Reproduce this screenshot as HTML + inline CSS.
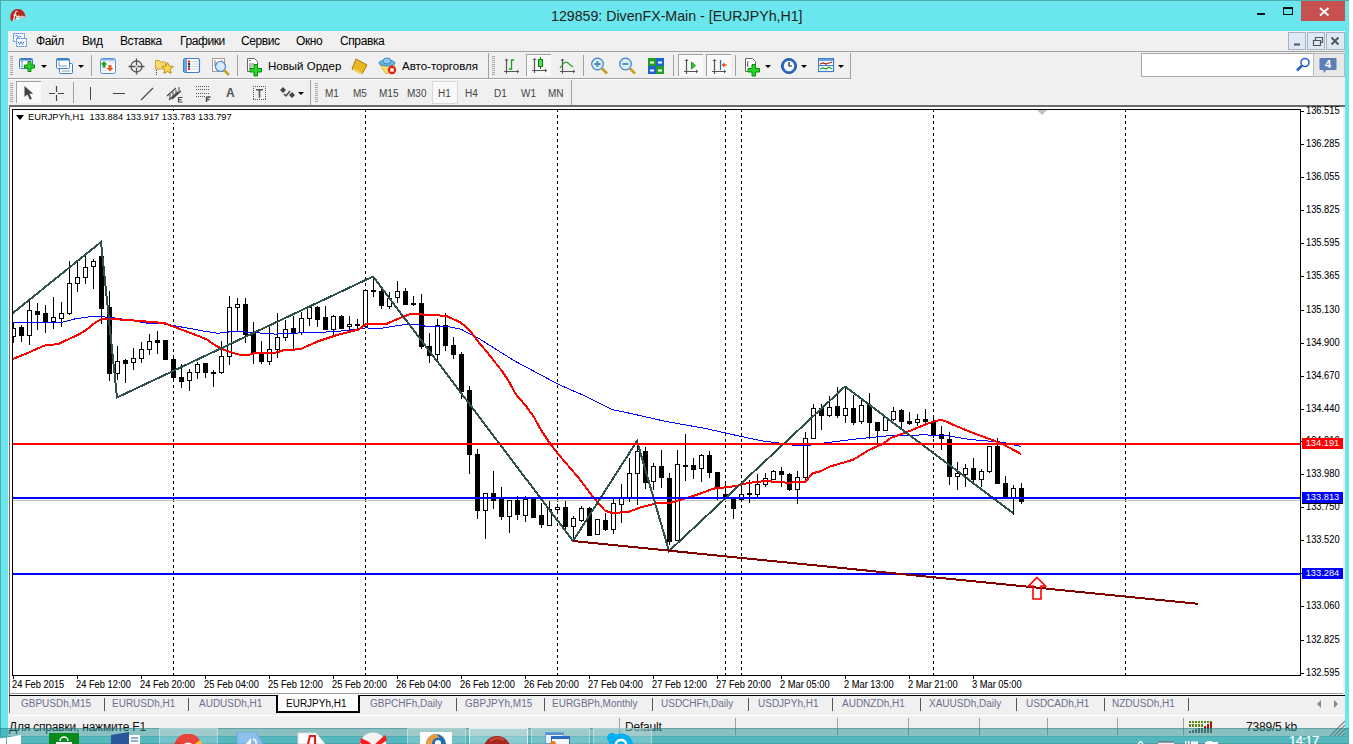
<!DOCTYPE html>
<html><head><meta charset="utf-8"><style>
*{margin:0;padding:0;box-sizing:content-box}
body{width:1353px;height:744px;overflow:hidden;position:relative;background:#6ae7ec;font-family:"Liberation Sans", sans-serif}
.a{position:absolute}
.tk{position:absolute;background:#000}
.pl{position:absolute;left:1306px;font-size:10px;line-height:12px;color:#000;white-space:nowrap;transform:scaleX(0.93);transform-origin:0 0;-webkit-text-stroke:0.08px #000}
.hl{position:absolute;left:1302px;width:41px;height:11px;color:#fff;font-size:9.3px;line-height:11px;text-align:center}
.tl{position:absolute;top:679px;font-size:10px;line-height:12px;color:#000;white-space:nowrap;transform:scaleX(0.93);transform-origin:0 0;-webkit-text-stroke:0.08px #000}
.tab{position:absolute;top:698px;font-size:10px;line-height:12px;color:#6e6e8c;white-space:nowrap}
.mn{position:absolute;top:34px;font-size:12px;letter-spacing:-0.4px;line-height:15px;color:#000;white-space:nowrap}
.tf{position:absolute;top:87px;font-size:10px;line-height:13px;color:#444;white-space:nowrap}
</style></head><body>
<!-- title bar -->
<div class="a" style="left:0;top:0;width:1353px;height:1px;background:#4faaae"></div>
<div class="a" style="left:0;top:0;width:1px;height:744px;background:#4faaae"></div>
<div class="a" style="left:1349px;top:0;width:4px;height:744px;background:#fff"></div>
<svg class="a" style="left:9px;top:8px" width="18" height="14"><path d="M2,13 C0,8 2,2 8,1 C13,0.5 16,4 16.5,9 C14,7 10,7.5 7.5,10 C6,11.5 4,13 2,13 Z" fill="#b8281e"/><path d="M16.5,9 C14,7 10,7.5 7.5,10 C10,9 13,9.5 16,10.5 Z" fill="#f2b0a8"/><path d="M4.5,12.5 L6.5,4.5 Q7,3 8.5,3.3 M4.5,7 h3 M7,7.5 l3,4 M10,7.5 l-3,4" stroke="#fff" stroke-width="1.1" fill="none"/></svg>
<div class="a" style="left:551px;top:7px;font-size:14.2px;line-height:18px;color:#222;white-space:nowrap">129859: DivenFX-Main - [EURJPYh,H1]</div>
<div class="a" style="left:1257px;top:13px;width:8px;height:2px;background:#1a1010"></div>
<div class="a" style="left:1283px;top:7px;width:8px;height:5px;border:1px solid #1a1010;border-top:2px solid #1a1010"></div>
<div class="a" style="left:1301px;top:1px;width:44px;height:20px;background:#c75050"></div>
<svg class="a" style="left:1316px;top:5px" width="16" height="14"><path d="M4,3 L12.5,10.5 M12.5,3 L4,10.5" stroke="#fff" stroke-width="1.8"/></svg>
<!-- app body -->
<div class="a" style="left:8px;top:31px;width:1337px;height:697px;background:#f0f0f0"></div>
<div class="a" style="left:8px;top:51px;width:1337px;height:1px;background:#a0a0a0"></div>
<svg class="a" style="left:12px;top:32px" width="17" height="16"><rect x="1.5" y="1.5" width="11" height="8" fill="#fff" stroke="#4a86e8" stroke-dasharray="1.5 0.5"/><rect x="4.5" y="6.5" width="10" height="8" fill="#fff" stroke="#4a86e8" stroke-dasharray="1.5 0.5"/><path d="M3,4.5 l1.5,-1.5 l1.5,3 l1.5,-2 l2,1" stroke="#4a86e8" fill="none"/><path d="M6,9.5 l1.5,3 l1.5,-3 l1.5,3 l1.5,-3" stroke="#4a86e8" fill="none"/></svg>
<div class="mn" style="left:36px">Файл</div>
<div class="mn" style="left:82px">Вид</div>
<div class="mn" style="left:120px">Вставка</div>
<div class="mn" style="left:180px">Графики</div>
<div class="mn" style="left:241px">Сервис</div>
<div class="mn" style="left:296px">Окно</div>
<div class="mn" style="left:340px">Справка</div>
<!-- MDI buttons -->
<div class="a" style="left:1288px;top:32px;width:16px;height:16px;border:1px solid #a6b2c2;background:#dfe9f5"></div>
<div class="a" style="left:1307px;top:32px;width:16px;height:16px;border:1px solid #a6b2c2;background:#dfe9f5"></div>
<div class="a" style="left:1326px;top:32px;width:17px;height:16px;border:1px solid #a6b2c2;background:#dfe9f5"></div>
<svg class="a" style="left:1288px;top:32px" width="57" height="18">
<path d="M6,12.5 h6" stroke="#555" stroke-width="2"/>
<path d="M25.5,8.5 h7 v5 h-7 z M27.5,8.5 v-3 h7 v5 h-2" stroke="#555" stroke-width="1.2" fill="none"/>
<path d="M43.5,5.5 l7,7 M50.5,5.5 l-7,7" stroke="#555" stroke-width="2"/>
</svg>
<!-- search -->
<div class="a" style="left:1141px;top:53px;width:171px;height:22px;border:1px solid #a8a8a8;background:#fff"></div>
<div class="a" style="left:1313px;top:53px;width:30px;height:22px;border:1px solid #b8b8b8;background:#e8e8e8"></div>
<svg class="a" style="left:1319px;top:57px" width="18" height="18"><path d="M1.5,1 h15 a1,1 0 0 1 1,1 v10 a1,1 0 0 1 -1,1 h-9 l-3,3 v-3 h-3 a1,1 0 0 1 -1,-1 v-10 a1,1 0 0 1 1,-1 z" fill="#5b7fb5"/></svg>
<div class="a" style="left:1321px;top:58px;width:14px;height:12px;color:#fff;font-size:11px;line-height:12px;text-align:center;font-weight:bold">4</div>
<svg class="a" style="left:1295px;top:57px" width="16" height="16"><circle cx="10" cy="5.5" r="4" fill="#fff" stroke="#2a62c8" stroke-width="1.6"/><path d="M7,8.5 l-5,5" stroke="#2a62c8" stroke-width="2.6"/></svg>
<!-- toolbar -->
<div class="a" style="left:8px;top:78px;width:843px;height:1px;background:#a0a0a0"></div>
<div class="a" style="left:8px;top:79px;width:844px;height:1px;background:#fff"></div>
<div class="a" style="left:10px;top:56px;width:3px;height:1px;background:#a8a8a8"></div><div class="a" style="left:10px;top:58px;width:3px;height:1px;background:#a8a8a8"></div><div class="a" style="left:10px;top:60px;width:3px;height:1px;background:#a8a8a8"></div><div class="a" style="left:10px;top:62px;width:3px;height:1px;background:#a8a8a8"></div><div class="a" style="left:10px;top:64px;width:3px;height:1px;background:#a8a8a8"></div><div class="a" style="left:10px;top:66px;width:3px;height:1px;background:#a8a8a8"></div><div class="a" style="left:10px;top:68px;width:3px;height:1px;background:#a8a8a8"></div><div class="a" style="left:10px;top:70px;width:3px;height:1px;background:#a8a8a8"></div><div class="a" style="left:10px;top:72px;width:3px;height:1px;background:#a8a8a8"></div><div class="a" style="left:10px;top:74px;width:3px;height:1px;background:#a8a8a8"></div>
<svg class="a" style="left:19px;top:57px" width="18" height="17" viewBox="0 0 18 17"><rect x="0.5" y="1.5" width="13" height="10" rx="1" fill="#fff" stroke="#3b7fc6"/><rect x="1" y="2" width="12" height="1.5" fill="#3b7fc6"/><path d="M3,4 v6 M2,5 l1,-1 l1,1 M2,9 l1,1 l1,-1" stroke="#7a9cc0" fill="none"/><path d="M9,4.5 h3 v3.5 h3.5 v3 h-3.5 v3.5 h-3 v-3.5 h-3.5 v-3 h3.5 z" fill="#2ad62a" stroke="#0a8a0a"/></svg>
<div class="a" style="left:41px;top:65px;width:0;height:0;border-left:3px solid transparent;border-right:3px solid transparent;border-top:3px solid #000"></div>
<svg class="a" style="left:56px;top:57px" width="19" height="18" viewBox="0 0 19 18"><rect x="3.5" y="6.5" width="13" height="10" rx="1" fill="#fff" stroke="#3b7fc6"/><rect x="0.5" y="1.5" width="13" height="10" rx="1" fill="#fff" stroke="#3b7fc6"/><rect x="1" y="2" width="12" height="1.5" fill="#3b7fc6"/><path d="M3,4 v5 M3,9 h8 M6,14 h8" stroke="#7a9cc0" fill="none"/></svg>
<div class="a" style="left:78px;top:65px;width:0;height:0;border-left:3px solid transparent;border-right:3px solid transparent;border-top:3px solid #000"></div>
<div class="a" style="left:91px;top:55px;width:1px;height:21px;background:#a0a0a0"></div>
<svg class="a" style="left:100px;top:58px" width="17" height="16" viewBox="0 0 17 16"><rect x="0.5" y="0.5" width="15" height="15" rx="2" fill="#fff" stroke="#4a92e0"/><rect x="1" y="1" width="14" height="1.5" fill="#7ab0e8"/><path d="M2,10.5 h5 M2,12.5 h4 M9,5 h5 M9,3.5 h5" stroke="#dde" fill="none"/><path d="M4,3 l3.5,3.5 h-2 v3 h-3 v-3 h-2 z" fill="#1aa01a"/><path d="M10,13.5 l3.5,-3.5 h-2 v-3 h-3 v3 h-2 z" fill="#e85a2a"/></svg>
<svg class="a" style="left:128px;top:58px" width="17" height="17" viewBox="0 0 17 17"><circle cx="8.5" cy="8.5" r="5.5" fill="none" stroke="#555" stroke-width="1.3"/><path d="M8.5,0.5 v7 M8.5,9.5 v7 M0.5,8.5 h7 M9.5,8.5 h7" stroke="#555" stroke-width="1.3"/></svg>
<svg class="a" style="left:154px;top:57px" width="20" height="18" viewBox="0 0 20 18"><path d="M1.5,3.5 h4 l1,1.5 h5 v7 h-10 z" fill="#f6dc6c" stroke="#c9a23c"/><path d="M13.5,5.5 l1.8,3.6 l4,0.5 l-2.9,2.8 l0.7,4 l-3.6,-1.9 l-3.6,1.9 l0.7,-4 l-2.9,-2.8 l4,-0.5 z" fill="#f7d84a" stroke="#c08a20"/><path d="M2.5,13 v1 M2.5,15 v1 M2.5,17 v1" stroke="#333"/></svg>
<svg class="a" style="left:183px;top:58px" width="18" height="16" viewBox="0 0 18 16"><rect x="0.5" y="0.5" width="16" height="14" rx="2" fill="#fff" stroke="#3b7ec8" stroke-width="1.2"/><rect x="1" y="1" width="3" height="13" fill="#6aa0dc"/><path d="M7,3.5 h9 M7,6 h9 M7,8.5 h9 M7,11 h9" stroke="#c8d8f4"/><rect x="5" y="2.5" width="2" height="2" fill="#e22"/><rect x="5" y="5" width="2" height="2" fill="#333"/><rect x="5" y="7.5" width="2" height="2" fill="#333"/><rect x="5" y="10" width="2" height="2" fill="#e22"/></svg>
<svg class="a" style="left:211px;top:57px" width="20" height="20" viewBox="0 0 20 20"><rect x="1.5" y="1.5" width="12" height="13" fill="#fff" stroke="#a89c88"/><path d="M4,3 v6 M11,3 v5" stroke="#777"/><circle cx="9.5" cy="9.5" r="5" fill="#d8ecfb" stroke="#4a88d8" stroke-width="1.2"/><path d="M13,13 l5,5" stroke="#c8a020" stroke-width="2.5"/></svg>
<div class="a" style="left:237px;top:55px;width:1px;height:21px;background:#a0a0a0"></div>
<svg class="a" style="left:246px;top:57px" width="19" height="20" viewBox="0 0 19 20"><path d="M1.5,1.5 h7 l3,3 v10 h-10 z" fill="#fff" stroke="#666"/><path d="M3,3.5 h2 M3,7 h5 M3,9 h4 M3,11 h3" stroke="#777"/><path d="M8,7.5 h3.5 v4 h4 v3.5 h-4 v4 h-3.5 v-4 h-4 v-3.5 h4 z" fill="#2ad62a" stroke="#0a8a0a"/></svg>
<svg class="a" style="left:351px;top:58px" width="18" height="17" viewBox="0 0 18 17"><path d="M5,1 l11,6 l-5,9 l-10,-5 z" fill="#e8b820" stroke="#b07a10"/><path d="M2,11 l9,5" stroke="#f0d870" stroke-width="1.5"/></svg>
<svg class="a" style="left:378px;top:57px" width="19" height="18" viewBox="0 0 19 18"><path d="M2,8 l6,9 l7,-3 l2,-6 z" fill="#f4e06a" stroke="#d8b840"/><ellipse cx="9" cy="6" rx="8" ry="3" fill="#6ab4e0" stroke="#3a8cc0"/><ellipse cx="9" cy="4" rx="4" ry="3" fill="#8ccaf0" stroke="#3a8cc0"/><circle cx="14" cy="13" r="4.2" fill="#e02010"/><rect x="12.3" y="11.3" width="3.4" height="3.4" fill="#fff"/></svg>
<div class="a" style="left:488px;top:53px;width:1px;height:25px;background:#a0a0a0"></div>
<div class="a" style="left:492px;top:56px;width:3px;height:1px;background:#a8a8a8"></div><div class="a" style="left:492px;top:58px;width:3px;height:1px;background:#a8a8a8"></div><div class="a" style="left:492px;top:60px;width:3px;height:1px;background:#a8a8a8"></div><div class="a" style="left:492px;top:62px;width:3px;height:1px;background:#a8a8a8"></div><div class="a" style="left:492px;top:64px;width:3px;height:1px;background:#a8a8a8"></div><div class="a" style="left:492px;top:66px;width:3px;height:1px;background:#a8a8a8"></div><div class="a" style="left:492px;top:68px;width:3px;height:1px;background:#a8a8a8"></div><div class="a" style="left:492px;top:70px;width:3px;height:1px;background:#a8a8a8"></div><div class="a" style="left:492px;top:72px;width:3px;height:1px;background:#a8a8a8"></div><div class="a" style="left:492px;top:74px;width:3px;height:1px;background:#a8a8a8"></div>
<svg class="a" style="left:502px;top:58px" width="18" height="16" viewBox="0 0 18 16"><path d="M4.5,1.5 v14 M2,13.5 h15" stroke="#555" stroke-width="1.2"/><path d="M4.5,0.5 l-2,2 h4 z M17,13.5 l-2,-2 v4 z" fill="#555"/><path d="M7,11 h2.5 v-9 h2.5" stroke="#18a018" stroke-width="1.3" fill="none"/></svg>
<div class="a" style="left:526px;top:54px;width:24px;height:21px;border-left:1px solid #a0a0a0;border-top:1px solid #a0a0a0;background:#f9f9f9"></div>
<svg class="a" style="left:531px;top:57px" width="18" height="17" viewBox="0 0 18 17"><path d="M3.5,2 v14 M1,13.5 h15" stroke="#555" stroke-width="1.2"/><path d="M3.5,1 l-2,2 h4 z M16,13.5 l-2,-2 v4 z" fill="#555"/><path d="M9.5,0 v12" stroke="#108010"/><rect x="7.5" y="2.5" width="4" height="7" fill="#50e050" stroke="#108010"/></svg>
<svg class="a" style="left:559px;top:58px" width="18" height="16" viewBox="0 0 18 16"><path d="M3.5,1.5 v14 M1,13.5 h15" stroke="#555" stroke-width="1.2"/><path d="M3.5,0.5 l-2,2 h4 z M16,13.5 l-2,-2 v4 z" fill="#555"/><path d="M1,10 q5,-8 8,-5 q2,2 5,4" stroke="#30a030" stroke-width="1.2" fill="none"/></svg>
<div class="a" style="left:583px;top:55px;width:1px;height:21px;background:#a0a0a0"></div>
<svg class="a" style="left:590px;top:57px" width="20" height="19" viewBox="0 0 20 19"><circle cx="7.5" cy="7" r="5.8" fill="#d8eefb" stroke="#3a80c8" stroke-width="1.2"/><path d="M4.5,7 h6 M7.5,4 v6" stroke="#4a8ab8" stroke-width="1.8"/><path d="M12,11.5 l5,5" stroke="#c8a020" stroke-width="2.8"/></svg>
<svg class="a" style="left:618px;top:57px" width="20" height="19" viewBox="0 0 20 19"><circle cx="7.5" cy="7" r="5.8" fill="#d8eefb" stroke="#3a80c8" stroke-width="1.2"/><path d="M4.5,7 h6" stroke="#4a8ab8" stroke-width="1.8"/><path d="M12,11.5 l5,5" stroke="#c8a020" stroke-width="2.8"/></svg>
<svg class="a" style="left:648px;top:58px" width="16" height="16" viewBox="0 0 16 16"><rect x="0" y="0" width="8" height="8" fill="#20a020"/><rect x="8" y="0" width="8" height="8" fill="#2060d8"/><rect x="0" y="8" width="8" height="8" fill="#2060d8"/><rect x="8" y="8" width="8" height="8" fill="#20a020"/><path d="M2,4.5 h4 M10,4.5 h4 M2,12.5 h4 M10,12.5 h4" stroke="#fff" stroke-width="2"/></svg>
<div class="a" style="left:673px;top:55px;width:1px;height:21px;background:#a0a0a0"></div>
<div class="a" style="left:678px;top:54px;width:24px;height:21px;border-left:1px solid #a0a0a0;border-top:1px solid #a0a0a0;background:#f9f9f9"></div>
<svg class="a" style="left:682px;top:59px" width="18" height="16" viewBox="0 0 18 16"><path d="M4.5,1 v14 M2,12.5 h14" stroke="#555" stroke-width="1.2"/><path d="M4.5,0 l-2,2 h4 z M16,12.5 l-2,-2 v4 z" fill="#555"/><path d="M9.5,3 l4,3.5 l-4,3.5 z" fill="#40c040" stroke="#20a020"/></svg>
<div class="a" style="left:706px;top:54px;width:24px;height:21px;border-left:1px solid #a0a0a0;border-top:1px solid #a0a0a0;background:#f9f9f9"></div>
<svg class="a" style="left:710px;top:59px" width="18" height="16" viewBox="0 0 18 16"><path d="M4.5,1 v14 M2,12.5 h14" stroke="#555" stroke-width="1.2"/><path d="M4.5,0 l-2,2 h4 z M16,12.5 l-2,-2 v4 z" fill="#555"/><path d="M10.5,1 v10" stroke="#2070b0" stroke-width="1.2"/><path d="M11.5,6 l3,-2.5 v1.8 h2 v1.4 h-2 v1.8 z" fill="#e05010"/></svg>
<div class="a" style="left:735px;top:55px;width:1px;height:21px;background:#a0a0a0"></div>
<svg class="a" style="left:744px;top:57px" width="19" height="20" viewBox="0 0 19 20"><path d="M1.5,1.5 h7 l3,3 v10 h-10 z" fill="#fff" stroke="#666"/><path d="M4,4 q-1,3 0,6" stroke="#555" fill="none"/><path d="M8,7.5 h3.5 v4 h4 v3.5 h-4 v4 h-3.5 v-4 h-4 v-3.5 h4 z" fill="#2ad62a" stroke="#0a8a0a"/></svg>
<div class="a" style="left:765px;top:65px;width:0;height:0;border-left:3px solid transparent;border-right:3px solid transparent;border-top:3px solid #000"></div>
<svg class="a" style="left:780px;top:57px" width="18" height="18" viewBox="0 0 18 18"><circle cx="9" cy="9" r="7.5" fill="#2a6cc8" stroke="#1a4c98"/><circle cx="9" cy="9" r="5.2" fill="#f4f8fc"/><path d="M9,5 v4 h3" stroke="#222" stroke-width="1.2" fill="none"/></svg>
<div class="a" style="left:801px;top:65px;width:0;height:0;border-left:3px solid transparent;border-right:3px solid transparent;border-top:3px solid #000"></div>
<svg class="a" style="left:818px;top:58px" width="17" height="15" viewBox="0 0 17 15"><rect x="0.5" y="0.5" width="15" height="13" fill="#fff" stroke="#3b7ec8" stroke-width="1.2"/><rect x="1" y="1" width="14" height="2" fill="#6aa0dc"/><path d="M0.5,7.5 h15" stroke="#3b7ec8"/><path d="M2,6 l3,-1 l3,1 l3,-1 l3,-1" stroke="#b02010" fill="none" stroke-width="1.2"/><path d="M2,11 l3,-1 l3,1 l3,-2 l3,2" stroke="#20a020" fill="none" stroke-width="1.2"/></svg>
<div class="a" style="left:838px;top:65px;width:0;height:0;border-left:3px solid transparent;border-right:3px solid transparent;border-top:3px solid #000"></div>
<div class="a" style="left:850px;top:53px;width:1px;height:25px;background:#a0a0a0"></div>
<div class="a" style="left:10px;top:83px;width:3px;height:1px;background:#a8a8a8"></div><div class="a" style="left:10px;top:85px;width:3px;height:1px;background:#a8a8a8"></div><div class="a" style="left:10px;top:87px;width:3px;height:1px;background:#a8a8a8"></div><div class="a" style="left:10px;top:89px;width:3px;height:1px;background:#a8a8a8"></div><div class="a" style="left:10px;top:91px;width:3px;height:1px;background:#a8a8a8"></div><div class="a" style="left:10px;top:93px;width:3px;height:1px;background:#a8a8a8"></div><div class="a" style="left:10px;top:95px;width:3px;height:1px;background:#a8a8a8"></div><div class="a" style="left:10px;top:97px;width:3px;height:1px;background:#a8a8a8"></div><div class="a" style="left:10px;top:99px;width:3px;height:1px;background:#a8a8a8"></div><div class="a" style="left:10px;top:101px;width:3px;height:1px;background:#a8a8a8"></div>
<div class="a" style="left:16px;top:81px;width:24px;height:21px;border-left:1px solid #a0a0a0;border-top:1px solid #a0a0a0;background:#f9f9f9"></div>
<svg class="a" style="left:23px;top:85px" width="11" height="16" viewBox="0 0 11 16"><path d="M1.5,1 v11 l2.8,-2.6 l2.6,5.4 l2,-1 l-2.5,-5 h3.8 z" fill="#444"/></svg>
<svg class="a" style="left:48px;top:85px" width="17" height="17" viewBox="0 0 17 17"><path d="M8.5,1 v6 M8.5,10 v6 M1,8.5 h6 M10,8.5 h6" stroke="#444" stroke-width="1.2"/></svg>
<div class="a" style="left:73px;top:82px;width:1px;height:21px;background:#a0a0a0"></div>
<div class="a" style="left:90px;top:87px;width:1px;height:13px;background:#444"></div>
<div class="a" style="left:113px;top:93px;width:12px;height:1px;background:#444"></div>
<svg class="a" style="left:140px;top:87px" width="15" height="14" viewBox="0 0 15 14"><path d="M1,13 L13,1" stroke="#444" stroke-width="1.1"/></svg>
<svg class="a" style="left:166px;top:85px" width="18" height="18" viewBox="0 0 18 18"><path d="M1,11 L10,3 M3,15 L12,7 M6,14 L15,6" stroke="#444" stroke-width="1.1"/><path d="M4,9 v5 M7,7 v5 M10,5 v5 M13,2 v5" stroke="#444"/><path d="M12.5,12.5 h4 M12.5,12.5 v4.5 h4 M12.5,14.7 h3" stroke="#444" stroke-width="1.1" fill="none"/></svg>
<svg class="a" style="left:196px;top:85px" width="16" height="18" viewBox="0 0 16 18"><rect x="0" y="1" width="1" height="1" fill="#555"/><rect x="2" y="1" width="1" height="1" fill="#555"/><rect x="4" y="1" width="1" height="1" fill="#555"/><rect x="6" y="1" width="1" height="1" fill="#555"/><rect x="8" y="1" width="1" height="1" fill="#555"/><rect x="10" y="1" width="1" height="1" fill="#555"/><rect x="12" y="1" width="1" height="1" fill="#555"/><rect x="0" y="4" width="1" height="1" fill="#555"/><rect x="2" y="4" width="1" height="1" fill="#555"/><rect x="4" y="4" width="1" height="1" fill="#555"/><rect x="6" y="4" width="1" height="1" fill="#555"/><rect x="8" y="4" width="1" height="1" fill="#555"/><rect x="10" y="4" width="1" height="1" fill="#555"/><rect x="12" y="4" width="1" height="1" fill="#555"/><rect x="0" y="8" width="1" height="1" fill="#555"/><rect x="2" y="8" width="1" height="1" fill="#555"/><rect x="4" y="8" width="1" height="1" fill="#555"/><rect x="6" y="8" width="1" height="1" fill="#555"/><rect x="8" y="8" width="1" height="1" fill="#555"/><rect x="10" y="8" width="1" height="1" fill="#555"/><rect x="12" y="8" width="1" height="1" fill="#555"/><rect x="0" y="11" width="1" height="1" fill="#555"/><rect x="2" y="11" width="1" height="1" fill="#555"/><rect x="4" y="11" width="1" height="1" fill="#555"/><rect x="6" y="11" width="1" height="1" fill="#555"/><rect x="8" y="11" width="1" height="1" fill="#555"/><path d="M10.5,12 h4 M10.5,12 v5 M10.5,14.5 h3" stroke="#444" stroke-width="1.4" fill="none"/></svg>
<div class="a" style="left:226px;top:86px;font-size:12px;line-height:14px;color:#555;font-weight:bold">A</div>
<svg class="a" style="left:253px;top:86px" width="14" height="15" viewBox="0 0 14 15"><rect x="0" y="0" width="1" height="1" fill="#555"/><rect x="0" y="13" width="1" height="1" fill="#555"/><rect x="2" y="0" width="1" height="1" fill="#555"/><rect x="2" y="13" width="1" height="1" fill="#555"/><rect x="4" y="0" width="1" height="1" fill="#555"/><rect x="4" y="13" width="1" height="1" fill="#555"/><rect x="6" y="0" width="1" height="1" fill="#555"/><rect x="6" y="13" width="1" height="1" fill="#555"/><rect x="8" y="0" width="1" height="1" fill="#555"/><rect x="8" y="13" width="1" height="1" fill="#555"/><rect x="10" y="0" width="1" height="1" fill="#555"/><rect x="10" y="13" width="1" height="1" fill="#555"/><rect x="12" y="0" width="1" height="1" fill="#555"/><rect x="12" y="13" width="1" height="1" fill="#555"/><rect x="0" y="0" width="1" height="1" fill="#555"/><rect x="12" y="0" width="1" height="1" fill="#555"/><rect x="0" y="2" width="1" height="1" fill="#555"/><rect x="12" y="2" width="1" height="1" fill="#555"/><rect x="0" y="4" width="1" height="1" fill="#555"/><rect x="12" y="4" width="1" height="1" fill="#555"/><rect x="0" y="6" width="1" height="1" fill="#555"/><rect x="12" y="6" width="1" height="1" fill="#555"/><rect x="0" y="8" width="1" height="1" fill="#555"/><rect x="12" y="8" width="1" height="1" fill="#555"/><rect x="0" y="10" width="1" height="1" fill="#555"/><rect x="12" y="10" width="1" height="1" fill="#555"/><rect x="0" y="12" width="1" height="1" fill="#555"/><rect x="12" y="12" width="1" height="1" fill="#555"/><path d="M3,3.8 h7 M6.5,3.8 v8" stroke="#555" stroke-width="1.6"/></svg>
<svg class="a" style="left:279px;top:85px" width="17" height="16" viewBox="0 0 17 16"><path d="M1,5 l3,-3 l3,3 l-3,3 z M10,10 l3,-3 l3,3 l-3,3 z" fill="#444"/><path d="M5,9 l2,2 l4,-5" stroke="#444" stroke-width="1.5" fill="none"/></svg>
<div class="a" style="left:298px;top:92px;width:0;height:0;border-left:3px solid transparent;border-right:3px solid transparent;border-top:3px solid #000"></div>
<div class="a" style="left:310px;top:80px;width:1px;height:25px;background:#a0a0a0"></div>
<div class="a" style="left:315px;top:83px;width:3px;height:1px;background:#a8a8a8"></div><div class="a" style="left:315px;top:85px;width:3px;height:1px;background:#a8a8a8"></div><div class="a" style="left:315px;top:87px;width:3px;height:1px;background:#a8a8a8"></div><div class="a" style="left:315px;top:89px;width:3px;height:1px;background:#a8a8a8"></div><div class="a" style="left:315px;top:91px;width:3px;height:1px;background:#a8a8a8"></div><div class="a" style="left:315px;top:93px;width:3px;height:1px;background:#a8a8a8"></div><div class="a" style="left:315px;top:95px;width:3px;height:1px;background:#a8a8a8"></div><div class="a" style="left:315px;top:97px;width:3px;height:1px;background:#a8a8a8"></div><div class="a" style="left:315px;top:99px;width:3px;height:1px;background:#a8a8a8"></div><div class="a" style="left:315px;top:101px;width:3px;height:1px;background:#a8a8a8"></div>
<div class="a" style="left:571px;top:80px;width:1px;height:25px;background:#a0a0a0"></div>
<div class="a" style="left:268px;top:59px;font-size:11.5px;line-height:14px;color:#000;white-space:nowrap">Новый Ордер</div>
<div class="a" style="left:402px;top:59px;font-size:11.5px;line-height:14px;color:#000;white-space:nowrap">Авто-торговля</div>
<div class="tf" style="left:325px">M1</div>
<div class="tf" style="left:353px">M5</div>
<div class="tf" style="left:379px">M15</div>
<div class="tf" style="left:407px">M30</div>
<div class="a" style="left:432px;top:81px;width:24px;height:21px;border:1px solid #d8d8d8;background:#f8f8f8"></div>
<div class="tf" style="left:438px">H1</div>
<div class="tf" style="left:465px">H4</div>
<div class="tf" style="left:494px">D1</div>
<div class="tf" style="left:521px">W1</div>
<div class="tf" style="left:548px">MN</div>
<!-- chart window -->
<div class="a" style="left:9px;top:105px;width:1336px;height:2px;background:#6a6a6a"></div>
<div class="a" style="left:9px;top:105px;width:1px;height:590px;background:#6a6a6a"></div>
<div class="a" style="left:10px;top:107px;width:1333px;height:588px;background:#fff"></div>
<div class="a" style="left:10px;top:693px;width:1333px;height:1px;background:#a0a0a0"></div>
<div class="a" style="left:9px;top:695px;width:1336px;height:1px;background:#000"></div>
<div class="a" style="left:12px;top:109px;width:1287px;height:565px;border:1px solid #000"></div>
<div class="a" style="left:16px;top:115px;width:0;height:0;border-left:4px solid transparent;border-right:4px solid transparent;border-top:5px solid #000"></div>
<div class="a" style="left:28px;top:111px;font-size:9.3px;line-height:12px;color:#000;white-space:nowrap;background:#fff;z-index:2">EURJPYh,H1&nbsp;&nbsp;133.884 133.917 133.783 133.797</div>
<div class="a" style="left:1037px;top:110px;width:0;height:0;border-left:5px solid transparent;border-right:5px solid transparent;border-top:5px solid #c0c0c0"></div>
<svg width="1353" height="744" style="position:absolute;left:0;top:0" shape-rendering="crispEdges"><defs><clipPath id="cc"><rect x="13" y="110" width="1287" height="565"/></clipPath></defs><g clip-path="url(#cc)">
<line x1="173.5" y1="110" x2="173.5" y2="675" stroke="#000" stroke-dasharray="3 3" stroke-dashoffset="1"/>
<line x1="365.5" y1="110" x2="365.5" y2="675" stroke="#000" stroke-dasharray="3 3" stroke-dashoffset="1"/>
<line x1="557.5" y1="110" x2="557.5" y2="675" stroke="#000" stroke-dasharray="3 3" stroke-dashoffset="1"/>
<line x1="725.5" y1="110" x2="725.5" y2="675" stroke="#000" stroke-dasharray="3 3" stroke-dashoffset="1"/>
<line x1="741.5" y1="110" x2="741.5" y2="675" stroke="#000" stroke-dasharray="3 3" stroke-dashoffset="1"/>
<line x1="933.5" y1="110" x2="933.5" y2="675" stroke="#000" stroke-dasharray="3 3" stroke-dashoffset="1"/>
<line x1="1125.5" y1="110" x2="1125.5" y2="675" stroke="#000" stroke-dasharray="3 3" stroke-dashoffset="1"/>
<rect x="13" y="500" width="1287" height="1" fill="#c0c0c0"/>
<rect x="13" y="322" width="1" height="21" fill="#000"/>
<rect x="11" y="328" width="5" height="9" fill="#000"/><rect x="12" y="329" width="3" height="7" fill="#fff"/>
<rect x="21" y="325" width="1" height="17" fill="#000"/>
<rect x="19" y="327" width="5" height="9" fill="#000"/>
<rect x="29" y="300" width="1" height="45" fill="#000"/>
<rect x="27" y="310" width="5" height="26" fill="#000"/><rect x="28" y="311" width="3" height="24" fill="#fff"/>
<rect x="37" y="303" width="1" height="27" fill="#000"/>
<rect x="35" y="311" width="5" height="4" fill="#000"/>
<rect x="45" y="305" width="1" height="28" fill="#000"/>
<rect x="43" y="313" width="5" height="10" fill="#000"/>
<rect x="53" y="297" width="1" height="32" fill="#000"/>
<rect x="51" y="317" width="5" height="5" fill="#000"/><rect x="52" y="318" width="3" height="3" fill="#fff"/>
<rect x="61" y="302" width="1" height="25" fill="#000"/>
<rect x="59" y="313" width="5" height="6" fill="#000"/><rect x="60" y="314" width="3" height="4" fill="#fff"/>
<rect x="69" y="261" width="1" height="54" fill="#000"/>
<rect x="67" y="283" width="5" height="31" fill="#000"/><rect x="68" y="284" width="3" height="29" fill="#fff"/>
<rect x="77" y="262" width="1" height="30" fill="#000"/>
<rect x="75" y="277" width="5" height="7" fill="#000"/><rect x="76" y="278" width="3" height="5" fill="#fff"/>
<rect x="85" y="255" width="1" height="29" fill="#000"/>
<rect x="83" y="267" width="5" height="11" fill="#000"/><rect x="84" y="268" width="3" height="9" fill="#fff"/>
<rect x="93" y="259" width="1" height="30" fill="#000"/>
<rect x="91" y="261" width="5" height="6" fill="#000"/><rect x="92" y="262" width="3" height="4" fill="#fff"/>
<rect x="101" y="242" width="1" height="82" fill="#000"/>
<rect x="99" y="256" width="5" height="53" fill="#000"/>
<rect x="109" y="291" width="1" height="90" fill="#000"/>
<rect x="107" y="307" width="5" height="67" fill="#000"/>
<rect x="117" y="346" width="1" height="34" fill="#000"/>
<rect x="115" y="361" width="5" height="13" fill="#000"/><rect x="116" y="362" width="3" height="11" fill="#fff"/>
<rect x="125" y="359" width="1" height="24" fill="#000"/>
<rect x="123" y="360" width="5" height="4" fill="#000"/>
<rect x="133" y="348" width="1" height="22" fill="#000"/>
<rect x="131" y="358" width="5" height="5" fill="#000"/><rect x="132" y="359" width="3" height="3" fill="#fff"/>
<rect x="141" y="342" width="1" height="21" fill="#000"/>
<rect x="139" y="349" width="5" height="10" fill="#000"/><rect x="140" y="350" width="3" height="8" fill="#fff"/>
<rect x="149" y="334" width="1" height="21" fill="#000"/>
<rect x="147" y="341" width="5" height="9" fill="#000"/><rect x="148" y="342" width="3" height="7" fill="#fff"/>
<rect x="157" y="331" width="1" height="23" fill="#000"/>
<rect x="155" y="340" width="5" height="3" fill="#000"/>
<rect x="165" y="340" width="1" height="20" fill="#000"/>
<rect x="163" y="340" width="5" height="20" fill="#000"/>
<rect x="173" y="355" width="1" height="24" fill="#000"/>
<rect x="171" y="359" width="5" height="19" fill="#000"/>
<rect x="181" y="364" width="1" height="24" fill="#000"/>
<rect x="179" y="377" width="5" height="5" fill="#000"/>
<rect x="189" y="369" width="1" height="22" fill="#000"/>
<rect x="187" y="372" width="5" height="9" fill="#000"/><rect x="188" y="373" width="3" height="7" fill="#fff"/>
<rect x="197" y="362" width="1" height="17" fill="#000"/>
<rect x="195" y="364" width="5" height="9" fill="#000"/><rect x="196" y="365" width="3" height="7" fill="#fff"/>
<rect x="205" y="363" width="1" height="15" fill="#000"/>
<rect x="203" y="363" width="5" height="10" fill="#000"/>
<rect x="213" y="370" width="1" height="17" fill="#000"/>
<rect x="211" y="372" width="5" height="2" fill="#000"/>
<rect x="221" y="341" width="1" height="33" fill="#000"/>
<rect x="219" y="356" width="5" height="17" fill="#000"/><rect x="220" y="357" width="3" height="15" fill="#fff"/>
<rect x="229" y="296" width="1" height="69" fill="#000"/>
<rect x="227" y="307" width="5" height="50" fill="#000"/><rect x="228" y="308" width="3" height="48" fill="#fff"/>
<rect x="237" y="298" width="1" height="34" fill="#000"/>
<rect x="235" y="304" width="5" height="4" fill="#000"/><rect x="236" y="305" width="3" height="2" fill="#fff"/>
<rect x="245" y="298" width="1" height="45" fill="#000"/>
<rect x="243" y="304" width="5" height="31" fill="#000"/>
<rect x="253" y="322" width="1" height="42" fill="#000"/>
<rect x="251" y="333" width="5" height="21" fill="#000"/>
<rect x="261" y="341" width="1" height="23" fill="#000"/>
<rect x="259" y="354" width="5" height="8" fill="#000"/>
<rect x="269" y="326" width="1" height="39" fill="#000"/>
<rect x="267" y="349" width="5" height="13" fill="#000"/><rect x="268" y="350" width="3" height="11" fill="#fff"/>
<rect x="277" y="313" width="1" height="45" fill="#000"/>
<rect x="275" y="337" width="5" height="13" fill="#000"/><rect x="276" y="338" width="3" height="11" fill="#fff"/>
<rect x="285" y="320" width="1" height="21" fill="#000"/>
<rect x="283" y="329" width="5" height="9" fill="#000"/><rect x="284" y="330" width="3" height="7" fill="#fff"/>
<rect x="293" y="316" width="1" height="34" fill="#000"/>
<rect x="291" y="328" width="5" height="6" fill="#000"/>
<rect x="301" y="312" width="1" height="23" fill="#000"/>
<rect x="299" y="318" width="5" height="15" fill="#000"/><rect x="300" y="319" width="3" height="13" fill="#fff"/>
<rect x="309" y="306" width="1" height="20" fill="#000"/>
<rect x="307" y="307" width="5" height="12" fill="#000"/><rect x="308" y="308" width="3" height="10" fill="#fff"/>
<rect x="317" y="306" width="1" height="21" fill="#000"/>
<rect x="315" y="307" width="5" height="13" fill="#000"/>
<rect x="325" y="306" width="1" height="24" fill="#000"/>
<rect x="323" y="317" width="5" height="13" fill="#000"/>
<rect x="333" y="315" width="1" height="21" fill="#000"/>
<rect x="331" y="316" width="5" height="14" fill="#000"/><rect x="332" y="317" width="3" height="12" fill="#fff"/>
<rect x="341" y="315" width="1" height="14" fill="#000"/>
<rect x="339" y="316" width="5" height="13" fill="#000"/>
<rect x="349" y="316" width="1" height="15" fill="#000"/>
<rect x="347" y="324" width="5" height="3" fill="#000"/><rect x="348" y="325" width="3" height="1" fill="#fff"/>
<rect x="357" y="319" width="1" height="10" fill="#000"/>
<rect x="355" y="324" width="5" height="2" fill="#000"/>
<rect x="365" y="289" width="1" height="39" fill="#000"/>
<rect x="363" y="290" width="5" height="37" fill="#000"/><rect x="364" y="291" width="3" height="35" fill="#fff"/>
<rect x="373" y="278" width="1" height="19" fill="#000"/>
<rect x="371" y="290" width="5" height="2" fill="#000"/>
<rect x="381" y="289" width="1" height="20" fill="#000"/>
<rect x="379" y="291" width="5" height="15" fill="#000"/>
<rect x="389" y="292" width="1" height="17" fill="#000"/>
<rect x="387" y="298" width="5" height="9" fill="#000"/><rect x="388" y="299" width="3" height="7" fill="#fff"/>
<rect x="397" y="281" width="1" height="22" fill="#000"/>
<rect x="395" y="291" width="5" height="7" fill="#000"/><rect x="396" y="292" width="3" height="5" fill="#fff"/>
<rect x="405" y="288" width="1" height="17" fill="#000"/>
<rect x="403" y="291" width="5" height="14" fill="#000"/>
<rect x="413" y="296" width="1" height="10" fill="#000"/>
<rect x="411" y="303" width="5" height="2" fill="#000"/>
<rect x="421" y="294" width="1" height="55" fill="#000"/>
<rect x="419" y="303" width="5" height="44" fill="#000"/>
<rect x="429" y="333" width="1" height="30" fill="#000"/>
<rect x="427" y="346" width="5" height="10" fill="#000"/>
<rect x="437" y="319" width="1" height="42" fill="#000"/>
<rect x="435" y="325" width="5" height="30" fill="#000"/><rect x="436" y="326" width="3" height="28" fill="#fff"/>
<rect x="445" y="313" width="1" height="38" fill="#000"/>
<rect x="443" y="325" width="5" height="21" fill="#000"/>
<rect x="453" y="337" width="1" height="22" fill="#000"/>
<rect x="451" y="345" width="5" height="10" fill="#000"/>
<rect x="461" y="352" width="1" height="47" fill="#000"/>
<rect x="459" y="354" width="5" height="38" fill="#000"/>
<rect x="469" y="386" width="1" height="88" fill="#000"/>
<rect x="467" y="390" width="5" height="65" fill="#000"/>
<rect x="477" y="449" width="1" height="70" fill="#000"/>
<rect x="475" y="454" width="5" height="57" fill="#000"/>
<rect x="485" y="493" width="1" height="46" fill="#000"/>
<rect x="483" y="493" width="5" height="18" fill="#000"/><rect x="484" y="494" width="3" height="16" fill="#fff"/>
<rect x="493" y="471" width="1" height="38" fill="#000"/>
<rect x="491" y="493" width="5" height="8" fill="#000"/>
<rect x="501" y="487" width="1" height="33" fill="#000"/>
<rect x="499" y="498" width="5" height="19" fill="#000"/>
<rect x="509" y="500" width="1" height="33" fill="#000"/>
<rect x="507" y="500" width="5" height="17" fill="#000"/><rect x="508" y="501" width="3" height="15" fill="#fff"/>
<rect x="517" y="496" width="1" height="24" fill="#000"/>
<rect x="515" y="500" width="5" height="15" fill="#000"/>
<rect x="525" y="496" width="1" height="26" fill="#000"/>
<rect x="523" y="499" width="5" height="17" fill="#000"/><rect x="524" y="500" width="3" height="15" fill="#fff"/>
<rect x="533" y="498" width="1" height="20" fill="#000"/>
<rect x="531" y="498" width="5" height="20" fill="#000"/>
<rect x="541" y="503" width="1" height="25" fill="#000"/>
<rect x="539" y="515" width="5" height="10" fill="#000"/>
<rect x="549" y="501" width="1" height="25" fill="#000"/>
<rect x="547" y="509" width="5" height="17" fill="#000"/><rect x="548" y="510" width="3" height="15" fill="#fff"/>
<rect x="557" y="504" width="1" height="7" fill="#000"/>
<rect x="555" y="507" width="5" height="3" fill="#000"/><rect x="556" y="508" width="3" height="1" fill="#fff"/>
<rect x="565" y="501" width="1" height="28" fill="#000"/>
<rect x="563" y="507" width="5" height="20" fill="#000"/>
<rect x="573" y="516" width="1" height="26" fill="#000"/>
<rect x="571" y="518" width="5" height="9" fill="#000"/><rect x="572" y="519" width="3" height="7" fill="#fff"/>
<rect x="581" y="506" width="1" height="16" fill="#000"/>
<rect x="579" y="508" width="5" height="13" fill="#000"/><rect x="580" y="509" width="3" height="11" fill="#fff"/>
<rect x="589" y="507" width="1" height="29" fill="#000"/>
<rect x="587" y="508" width="5" height="28" fill="#000"/>
<rect x="597" y="519" width="1" height="16" fill="#000"/>
<rect x="595" y="519" width="5" height="16" fill="#000"/><rect x="596" y="520" width="3" height="14" fill="#fff"/>
<rect x="605" y="513" width="1" height="18" fill="#000"/>
<rect x="603" y="520" width="5" height="10" fill="#000"/>
<rect x="613" y="499" width="1" height="35" fill="#000"/>
<rect x="611" y="503" width="5" height="27" fill="#000"/><rect x="612" y="504" width="3" height="25" fill="#fff"/>
<rect x="621" y="484" width="1" height="39" fill="#000"/>
<rect x="619" y="498" width="5" height="7" fill="#000"/><rect x="620" y="499" width="3" height="5" fill="#fff"/>
<rect x="629" y="458" width="1" height="44" fill="#000"/>
<rect x="627" y="473" width="5" height="26" fill="#000"/><rect x="628" y="474" width="3" height="24" fill="#fff"/>
<rect x="637" y="441" width="1" height="64" fill="#000"/>
<rect x="635" y="451" width="5" height="23" fill="#000"/><rect x="636" y="452" width="3" height="21" fill="#fff"/>
<rect x="645" y="447" width="1" height="42" fill="#000"/>
<rect x="643" y="451" width="5" height="32" fill="#000"/>
<rect x="653" y="463" width="1" height="27" fill="#000"/>
<rect x="651" y="466" width="5" height="16" fill="#000"/><rect x="652" y="467" width="3" height="14" fill="#fff"/>
<rect x="661" y="450" width="1" height="38" fill="#000"/>
<rect x="659" y="466" width="5" height="12" fill="#000"/>
<rect x="669" y="473" width="1" height="72" fill="#000"/>
<rect x="667" y="478" width="5" height="64" fill="#000"/>
<rect x="677" y="450" width="1" height="91" fill="#000"/>
<rect x="675" y="464" width="5" height="77" fill="#000"/><rect x="676" y="465" width="3" height="75" fill="#fff"/>
<rect x="685" y="434" width="1" height="47" fill="#000"/>
<rect x="683" y="465" width="5" height="2" fill="#000"/>
<rect x="693" y="458" width="1" height="21" fill="#000"/>
<rect x="691" y="465" width="5" height="5" fill="#000"/>
<rect x="701" y="454" width="1" height="28" fill="#000"/>
<rect x="699" y="455" width="5" height="14" fill="#000"/><rect x="700" y="456" width="3" height="12" fill="#fff"/>
<rect x="709" y="451" width="1" height="27" fill="#000"/>
<rect x="707" y="455" width="5" height="18" fill="#000"/>
<rect x="717" y="472" width="1" height="28" fill="#000"/>
<rect x="715" y="472" width="5" height="17" fill="#000"/>
<rect x="725" y="481" width="1" height="19" fill="#000"/>
<rect x="723" y="494" width="5" height="5" fill="#000"/>
<rect x="733" y="497" width="1" height="22" fill="#000"/>
<rect x="731" y="498" width="5" height="11" fill="#000"/>
<rect x="741" y="482" width="1" height="20" fill="#000"/>
<rect x="739" y="494" width="5" height="6" fill="#000"/><rect x="740" y="495" width="3" height="4" fill="#fff"/>
<rect x="749" y="480" width="1" height="23" fill="#000"/>
<rect x="747" y="493" width="5" height="2" fill="#000"/>
<rect x="757" y="474" width="1" height="24" fill="#000"/>
<rect x="755" y="484" width="5" height="11" fill="#000"/><rect x="756" y="485" width="3" height="9" fill="#fff"/>
<rect x="765" y="473" width="1" height="14" fill="#000"/>
<rect x="763" y="478" width="5" height="7" fill="#000"/><rect x="764" y="479" width="3" height="5" fill="#fff"/>
<rect x="773" y="470" width="1" height="10" fill="#000"/>
<rect x="771" y="471" width="5" height="9" fill="#000"/><rect x="772" y="472" width="3" height="7" fill="#fff"/>
<rect x="781" y="467" width="1" height="20" fill="#000"/>
<rect x="779" y="471" width="5" height="4" fill="#000"/>
<rect x="789" y="473" width="1" height="18" fill="#000"/>
<rect x="787" y="474" width="5" height="16" fill="#000"/>
<rect x="797" y="471" width="1" height="33" fill="#000"/>
<rect x="795" y="477" width="5" height="13" fill="#000"/><rect x="796" y="478" width="3" height="11" fill="#fff"/>
<rect x="805" y="432" width="1" height="49" fill="#000"/>
<rect x="803" y="438" width="5" height="40" fill="#000"/><rect x="804" y="439" width="3" height="38" fill="#fff"/>
<rect x="813" y="404" width="1" height="35" fill="#000"/>
<rect x="811" y="408" width="5" height="31" fill="#000"/><rect x="812" y="409" width="3" height="29" fill="#fff"/>
<rect x="821" y="404" width="1" height="26" fill="#000"/>
<rect x="819" y="408" width="5" height="8" fill="#000"/>
<rect x="829" y="396" width="1" height="21" fill="#000"/>
<rect x="827" y="407" width="5" height="9" fill="#000"/><rect x="828" y="408" width="3" height="7" fill="#fff"/>
<rect x="837" y="387" width="1" height="31" fill="#000"/>
<rect x="835" y="406" width="5" height="10" fill="#000"/>
<rect x="845" y="386" width="1" height="37" fill="#000"/>
<rect x="843" y="408" width="5" height="8" fill="#000"/><rect x="844" y="409" width="3" height="6" fill="#fff"/>
<rect x="853" y="395" width="1" height="30" fill="#000"/>
<rect x="851" y="408" width="5" height="15" fill="#000"/>
<rect x="861" y="400" width="1" height="24" fill="#000"/>
<rect x="859" y="405" width="5" height="17" fill="#000"/><rect x="860" y="406" width="3" height="15" fill="#fff"/>
<rect x="869" y="393" width="1" height="46" fill="#000"/>
<rect x="867" y="405" width="5" height="18" fill="#000"/>
<rect x="877" y="422" width="1" height="23" fill="#000"/>
<rect x="875" y="422" width="5" height="9" fill="#000"/>
<rect x="885" y="417" width="1" height="14" fill="#000"/>
<rect x="883" y="417" width="5" height="14" fill="#000"/><rect x="884" y="418" width="3" height="12" fill="#fff"/>
<rect x="893" y="407" width="1" height="14" fill="#000"/>
<rect x="891" y="411" width="5" height="9" fill="#000"/><rect x="892" y="412" width="3" height="7" fill="#fff"/>
<rect x="901" y="409" width="1" height="20" fill="#000"/>
<rect x="899" y="410" width="5" height="12" fill="#000"/>
<rect x="909" y="412" width="1" height="13" fill="#000"/>
<rect x="907" y="421" width="5" height="3" fill="#000"/>
<rect x="917" y="414" width="1" height="12" fill="#000"/>
<rect x="915" y="419" width="5" height="4" fill="#000"/><rect x="916" y="420" width="3" height="2" fill="#fff"/>
<rect x="925" y="409" width="1" height="14" fill="#000"/>
<rect x="923" y="419" width="5" height="3" fill="#000"/>
<rect x="933" y="417" width="1" height="21" fill="#000"/>
<rect x="931" y="421" width="5" height="14" fill="#000"/>
<rect x="941" y="426" width="1" height="24" fill="#000"/>
<rect x="939" y="434" width="5" height="5" fill="#000"/>
<rect x="949" y="432" width="1" height="53" fill="#000"/>
<rect x="947" y="439" width="5" height="38" fill="#000"/>
<rect x="957" y="462" width="1" height="28" fill="#000"/>
<rect x="955" y="473" width="5" height="4" fill="#000"/><rect x="956" y="474" width="3" height="2" fill="#fff"/>
<rect x="965" y="464" width="1" height="23" fill="#000"/>
<rect x="963" y="468" width="5" height="7" fill="#000"/><rect x="964" y="469" width="3" height="5" fill="#fff"/>
<rect x="973" y="458" width="1" height="24" fill="#000"/>
<rect x="971" y="468" width="5" height="12" fill="#000"/>
<rect x="981" y="469" width="1" height="18" fill="#000"/>
<rect x="979" y="471" width="5" height="9" fill="#000"/><rect x="980" y="472" width="3" height="7" fill="#fff"/>
<rect x="989" y="446" width="1" height="27" fill="#000"/>
<rect x="987" y="446" width="5" height="26" fill="#000"/><rect x="988" y="447" width="3" height="24" fill="#fff"/>
<rect x="997" y="438" width="1" height="46" fill="#000"/>
<rect x="995" y="446" width="5" height="38" fill="#000"/>
<rect x="1005" y="476" width="1" height="23" fill="#000"/>
<rect x="1003" y="483" width="5" height="16" fill="#000"/>
<rect x="1013" y="485" width="1" height="30" fill="#000"/>
<rect x="1011" y="488" width="5" height="11" fill="#000"/><rect x="1012" y="489" width="3" height="9" fill="#fff"/>
<rect x="1021" y="483" width="1" height="21" fill="#000"/>
<rect x="1019" y="488" width="5" height="14" fill="#000"/>
</g></svg>
<svg width="1353" height="744" style="position:absolute;left:0;top:0"><defs><clipPath id="cc2"><rect x="13" y="110" width="1287" height="565"/></clipPath></defs><g clip-path="url(#cc2)">
<polyline points="13,323 61.6,322.5 74.5,319 91.7,316.5 104.6,317 118.3,318.4 145.7,323 164,324 191.4,328.7 200,330.5 212,332.3 218,333.3 225.4,332.3 235,331.4 250.8,332.3 275,334.1 300,332.9 335.7,331.7 365.4,327.9 380,328.5 400,325.1 416.3,324.4 427,326.5 447.2,326.5 460.6,329.1 474,335.9 480,339.2 514,360.6 558.3,384.3 585,396 611.5,409.4 632.2,413.8 664.7,421.2 706,428.6 741.6,436.6 763.9,441.2 777,442.7 794,445.3 809,445.3 826,442.7 855.7,439 890,435.6 924.3,434.9 947,435.6 970,439.5 1001.9,442.2 1021,446.5" fill="none" stroke="#0000ff" stroke-width="1" shape-rendering="crispEdges"/>
<polyline points="13,359 30,352 43.9,345.6 58.4,344 63.2,341.6 77.7,335 85.8,330.3 95.5,322.3 102,319 122.9,319.6 164,323 173,326.4 200,336.6 207.3,339.6 214.5,345 224.2,349.9 235,353.5 242.3,355.3 249.6,354.7 255.6,352.9 275,352.9 284.6,349.9 300,349.3 317.4,341.6 335.7,335.4 350.5,331.5 358.5,329.5 365.6,324.4 385.4,324.4 397.5,319 410.9,313.7 420.3,313.7 424.4,315 436.5,315 447.2,316.4 460.6,322.4 470,330.5 480,344 484.3,348.8 502,371 508,380 516,394.5 525.8,405.8 533.9,417.1 541,430 550.3,443.9 557,452.6 568.2,465.7 579.5,478.9 593.6,497.7 605,510.6 612,513 628,512 640.6,507.4 656.8,503.4 669.7,503 685.7,498.3 700,493.7 713.7,488.6 725,487.4 737.7,485.7 748,482.9 757,482 768.6,480.6 774.3,482.3 790.3,482.6 805.3,481.7 812.9,473.2 820.4,471.3 830,466.6 853.4,459.6 869,450 882.7,444 891,437.9 905.3,432.7 924.3,425 932.9,421.8 939.4,420.2 944.2,420.6 955.5,425.8 973.2,433 997.4,441.9 1010,448 1021,454" fill="none" stroke="#ff0000" stroke-width="2" shape-rendering="crispEdges"/>
<polyline points="13,313 101,242 117,397.5 373,276.5 573,541 637,441 669,551 845,386.5 1013,513" fill="none" stroke="#2f4f4f" stroke-width="2" stroke-linejoin="miter" shape-rendering="crispEdges"/>
<rect x="13" y="443" width="1287" height="2" fill="#ff0000" shape-rendering="crispEdges"/>
<rect x="13" y="497" width="1287" height="2" fill="#0000ff" shape-rendering="crispEdges"/>
<rect x="13" y="573" width="1287" height="2" fill="#0000ff" shape-rendering="crispEdges"/>
<line x1="573" y1="541" x2="1197.6" y2="603.8" stroke="#800000" stroke-width="2" shape-rendering="crispEdges"/>
<path d="M1037,577.5 L1045.5,586 L1041,586 L1041,599 L1033,599 L1033,586 L1028.5,586 Z" fill="none" stroke="#ff0000" stroke-width="1.6"/>
</g></svg>
<div class="tk" style="left:1300px;top:111px;width:4px;height:1px"></div>
<div class="pl" style="top:105px">136.515</div>
<div class="tk" style="left:1300px;top:144px;width:4px;height:1px"></div>
<div class="pl" style="top:138px">136.285</div>
<div class="tk" style="left:1300px;top:177px;width:4px;height:1px"></div>
<div class="pl" style="top:171px">136.055</div>
<div class="tk" style="left:1300px;top:210px;width:4px;height:1px"></div>
<div class="pl" style="top:204px">135.825</div>
<div class="tk" style="left:1300px;top:243px;width:4px;height:1px"></div>
<div class="pl" style="top:237px">135.595</div>
<div class="tk" style="left:1300px;top:276px;width:4px;height:1px"></div>
<div class="pl" style="top:270px">135.365</div>
<div class="tk" style="left:1300px;top:310px;width:4px;height:1px"></div>
<div class="pl" style="top:304px">135.130</div>
<div class="tk" style="left:1300px;top:343px;width:4px;height:1px"></div>
<div class="pl" style="top:337px">134.900</div>
<div class="tk" style="left:1300px;top:376px;width:4px;height:1px"></div>
<div class="pl" style="top:370px">134.670</div>
<div class="tk" style="left:1300px;top:409px;width:4px;height:1px"></div>
<div class="pl" style="top:403px">134.440</div>
<div class="tk" style="left:1300px;top:441px;width:4px;height:1px"></div>
<div class="pl" style="top:435px">134.210</div>
<div class="tk" style="left:1300px;top:474px;width:4px;height:1px"></div>
<div class="pl" style="top:468px">133.980</div>
<div class="tk" style="left:1300px;top:507px;width:4px;height:1px"></div>
<div class="pl" style="top:501px">133.750</div>
<div class="tk" style="left:1300px;top:540px;width:4px;height:1px"></div>
<div class="pl" style="top:534px">133.520</div>
<div class="tk" style="left:1300px;top:573px;width:4px;height:1px"></div>
<div class="pl" style="top:567px">133.290</div>
<div class="tk" style="left:1300px;top:606px;width:4px;height:1px"></div>
<div class="pl" style="top:600px">133.060</div>
<div class="tk" style="left:1300px;top:640px;width:4px;height:1px"></div>
<div class="pl" style="top:634px">132.825</div>
<div class="tk" style="left:1300px;top:673px;width:4px;height:1px"></div>
<div class="pl" style="top:667px">132.595</div>
<div class="hl" style="top:438px;background:#ff0000">134.191</div>
<div class="hl" style="top:492px;background:#0000ff;border-bottom:1px solid #000">133.813</div>
<div class="hl" style="top:568px;background:#0000ff">133.284</div>
<div class="tk" style="left:13px;top:675px;width:1px;height:4px"></div>
<div class="tl" style="left:12px">24 Feb 2015</div>
<div class="tk" style="left:77px;top:675px;width:1px;height:4px"></div>
<div class="tl" style="left:76px">24 Feb 12:00</div>
<div class="tk" style="left:141px;top:675px;width:1px;height:4px"></div>
<div class="tl" style="left:140px">24 Feb 20:00</div>
<div class="tk" style="left:205px;top:675px;width:1px;height:4px"></div>
<div class="tl" style="left:204px">25 Feb 04:00</div>
<div class="tk" style="left:269px;top:675px;width:1px;height:4px"></div>
<div class="tl" style="left:268px">25 Feb 12:00</div>
<div class="tk" style="left:333px;top:675px;width:1px;height:4px"></div>
<div class="tl" style="left:332px">25 Feb 20:00</div>
<div class="tk" style="left:397px;top:675px;width:1px;height:4px"></div>
<div class="tl" style="left:396px">26 Feb 04:00</div>
<div class="tk" style="left:461px;top:675px;width:1px;height:4px"></div>
<div class="tl" style="left:460px">26 Feb 12:00</div>
<div class="tk" style="left:525px;top:675px;width:1px;height:4px"></div>
<div class="tl" style="left:524px">26 Feb 20:00</div>
<div class="tk" style="left:589px;top:675px;width:1px;height:4px"></div>
<div class="tl" style="left:588px">27 Feb 04:00</div>
<div class="tk" style="left:653px;top:675px;width:1px;height:4px"></div>
<div class="tl" style="left:652px">27 Feb 12:00</div>
<div class="tk" style="left:717px;top:675px;width:1px;height:4px"></div>
<div class="tl" style="left:716px">27 Feb 20:00</div>
<div class="tk" style="left:781px;top:675px;width:1px;height:4px"></div>
<div class="tl" style="left:780px">2 Mar 05:00</div>
<div class="tk" style="left:845px;top:675px;width:1px;height:4px"></div>
<div class="tl" style="left:844px">2 Mar 13:00</div>
<div class="tk" style="left:909px;top:675px;width:1px;height:4px"></div>
<div class="tl" style="left:908px">2 Mar 21:00</div>
<div class="tk" style="left:973px;top:675px;width:1px;height:4px"></div>
<div class="tl" style="left:972px">3 Mar 05:00</div>
<!-- tab bar -->
<div class="a" style="left:9px;top:696px;width:1px;height:17px;background:#6a6a6a"></div>
<div style="position:absolute;left:276px;top:695px;width:80px;height:16px;border:2px solid #000;border-top:none;background:#fff"></div>
<div class="tab" style="left:21px;color:#6b6f8f">GBPUSDh,M15</div>
<div class="tab" style="left:112px;color:#6b6f8f">EURUSDh,H1</div>
<div class="tab" style="left:199px;color:#6b6f8f">AUDUSDh,H1</div>
<div class="tab" style="left:286px;color:#000">EURJPYh,H1</div>
<div class="tab" style="left:370px;color:#6b6f8f">GBPCHFh,Daily</div>
<div class="tab" style="left:465px;color:#6b6f8f">GBPJPYh,M15</div>
<div class="tab" style="left:552px;color:#6b6f8f">EURGBPh,Monthly</div>
<div class="tab" style="left:661px;color:#6b6f8f">USDCHFh,Daily</div>
<div class="tab" style="left:758px;color:#6b6f8f">USDJPYh,H1</div>
<div class="tab" style="left:842px;color:#6b6f8f">AUDNZDh,H1</div>
<div class="tab" style="left:929px;color:#6b6f8f">XAUUSDh,Daily</div>
<div class="tab" style="left:1026px;color:#6b6f8f">USDCADh,H1</div>
<div class="tab" style="left:1112px;color:#6b6f8f">NZDUSDh,H1</div>
<svg style="position:absolute;left:1315px;top:699px" width="26" height="10"><path d="M6,1 L2,5 L6,9 Z M19,1 L23,5 L19,9 Z" fill="#8a8a8a"/></svg>
<div style="position:absolute;left:104px;top:698px;width:1px;height:13px;background:#555"></div>
<div style="position:absolute;left:188px;top:698px;width:1px;height:13px;background:#555"></div>
<div style="position:absolute;left:456px;top:698px;width:1px;height:13px;background:#555"></div>
<div style="position:absolute;left:544px;top:698px;width:1px;height:13px;background:#555"></div>
<div style="position:absolute;left:652px;top:698px;width:1px;height:13px;background:#555"></div>
<div style="position:absolute;left:748px;top:698px;width:1px;height:13px;background:#555"></div>
<div style="position:absolute;left:832px;top:698px;width:1px;height:13px;background:#555"></div>
<div style="position:absolute;left:920px;top:698px;width:1px;height:13px;background:#555"></div>
<div style="position:absolute;left:1016px;top:698px;width:1px;height:13px;background:#555"></div>
<div style="position:absolute;left:1104px;top:698px;width:1px;height:13px;background:#555"></div>
<div style="position:absolute;left:1188px;top:698px;width:1px;height:13px;background:#555"></div>
<!-- status bar -->
<div class="a" style="left:8px;top:714px;width:1337px;height:22px;background:#f0f0f0"></div>
<div class="a" style="left:8px;top:715px;width:1337px;height:1px;background:#fff"></div>
<div class="a" style="left:9px;top:720px;font-size:12px;letter-spacing:-0.2px;line-height:14px;color:#111;white-space:nowrap">Для справки, нажмите F1</div>
<div class="a" style="left:625px;top:720px;font-size:12px;letter-spacing:-0.2px;line-height:14px;color:#111;white-space:nowrap">Default</div>
<div class="a" style="left:1246px;top:720px;font-size:12px;letter-spacing:-0.2px;line-height:14px;color:#111;white-space:nowrap">7389/5 kb</div>
<div class="a" style="left:619px;top:718px;width:1px;height:17px;background:#a0a0a0"></div>
<div class="a" style="left:735px;top:718px;width:1px;height:17px;background:#a0a0a0"></div>
<div class="a" style="left:837px;top:718px;width:1px;height:17px;background:#a0a0a0"></div>
<div class="a" style="left:908px;top:718px;width:1px;height:17px;background:#a0a0a0"></div>
<div class="a" style="left:979px;top:718px;width:1px;height:17px;background:#a0a0a0"></div>
<div class="a" style="left:1047px;top:718px;width:1px;height:17px;background:#a0a0a0"></div>
<div class="a" style="left:1117px;top:718px;width:1px;height:17px;background:#a0a0a0"></div>
<div class="a" style="left:1183px;top:718px;width:1px;height:17px;background:#a0a0a0"></div>
<svg class="a" style="left:1189px;top:721px" width="24" height="12"><rect x="0" y="0" width="2" height="2" fill="#5a8a10"/><rect x="0" y="3" width="2" height="3" fill="#5a8a10"/><rect x="0" y="10" width="2" height="2" fill="#6b5a50"/><rect x="3" y="0" width="2" height="2" fill="#5a8a10"/><rect x="3" y="3" width="2" height="3" fill="#5a8a10"/><rect x="3" y="9" width="2" height="3" fill="#6b5a50"/><rect x="6" y="0" width="2" height="2" fill="#5a8a10"/><rect x="6" y="3" width="2" height="3" fill="#5a8a10"/><rect x="6" y="8" width="2" height="4" fill="#6b5a50"/><rect x="9" y="0" width="2" height="2" fill="#5a8a10"/><rect x="9" y="3" width="2" height="3" fill="#5a8a10"/><rect x="9" y="7" width="2" height="5" fill="#6b5a50"/><rect x="12" y="0" width="2" height="2" fill="#5a8a10"/><rect x="12" y="3" width="2" height="3" fill="#5a8a10"/><rect x="12" y="7" width="2" height="5" fill="#6b5a50"/><rect x="15" y="0" width="2" height="2" fill="#5a8a10"/><rect x="15" y="5" width="2" height="2" fill="#b01010"/><rect x="15" y="7" width="2" height="5" fill="#6b5a50"/><rect x="18" y="0" width="2" height="2" fill="#5a8a10"/><rect x="18" y="3" width="2" height="4" fill="#b01010"/><rect x="18" y="7" width="2" height="5" fill="#6b5a50"/><rect x="21" y="0" width="2" height="2" fill="#5a8a10"/><rect x="21" y="1" width="2" height="6" fill="#b01010"/><rect x="21" y="7" width="2" height="5" fill="#6b5a50"/></svg>
<svg class="a" style="left:1328px;top:720px" width="17" height="16"><path d="M17,1 L2,16 M17,5 L6,16 M17,9 L10,16 M17,13 L14,16" stroke="#8a8a8a" stroke-width="1.3" fill="none"/></svg>
<div class="a" style="left:0;top:728px;width:1349px;height:8px;background:rgba(30,140,145,0.48)"></div>
<div class="a" style="left:0;top:728px;width:1349px;height:1px;background:rgba(20,110,115,0.35)"></div>
<div class="a" style="left:0;top:736px;width:1349px;height:8px;background:#55b8bf"></div>
<div class="a" style="left:0;top:736px;width:1349px;height:1px;background:#4aabb0"></div>
<div class="a" style="left:0;top:743px;width:1349px;height:1px;background:#4a9fa5"></div>
<div class="a" style="left:159px;top:728px;width:57px;height:16px;border:1px solid rgba(255,255,255,0.35);border-bottom:none;background:rgba(255,255,255,0.18)"></div>
<div class="a" style="left:407px;top:728px;width:57px;height:16px;border:1px solid rgba(255,255,255,0.35);border-bottom:none;background:rgba(255,255,255,0.18)"></div>
<div class="a" style="left:531px;top:728px;width:57px;height:16px;border:1px solid rgba(255,255,255,0.35);border-bottom:none;background:rgba(255,255,255,0.18)"></div>
<div class="a" style="left:593px;top:728px;width:57px;height:16px;border:1px solid rgba(255,255,255,0.35);border-bottom:none;background:rgba(255,255,255,0.18)"></div>
<div class="a" style="left:469px;top:728px;width:57px;height:16px;border:1px solid rgba(255,255,255,0.7);border-bottom:none;background:rgba(255,255,255,0.3)"></div>
<svg class="a" style="left:0;top:734px" width="22" height="10"><path d="M0,4.5 L6,3.8 V10 H0 Z M7,3.6 L21,1 V10 H7 Z" fill="#fff"/></svg>
<div class="a" style="left:49px;top:733px;width:30px;height:11px;background:#0a8a1a"></div>
<svg class="a" style="left:49px;top:733px" width="30" height="11"><path d="M11,8 a4,4 0 0 1 8,0" stroke="#fff" stroke-width="1.5" fill="none"/><path d="M7,9 h16 v2 h-16 z" fill="#fff"/></svg>
<svg class="a" style="left:111px;top:732px" width="30" height="12"><path d="M0,3 L18,0 V12 H0 Z" fill="#2b579a"/><rect x="18" y="3" width="11" height="9" fill="#fff"/><path d="M20,6 h7 M20,9 h7" stroke="#2b579a"/></svg>
<svg class="a" style="left:173px;top:734px" width="30" height="10"><circle cx="15" cy="15" r="14.5" fill="#db3a2a"/><path d="M15,15 L3,6 A14.5,14.5 0 0 1 27,6 Z" fill="#e8453c"/><path d="M15,15 L27,6 A14.5,14.5 0 0 1 29.5,15 Z" fill="#fbc02d"/><circle cx="15" cy="15" r="6.5" fill="#fff"/><circle cx="15" cy="15" r="5" fill="#3d7de0"/></svg>
<svg class="a" style="left:234px;top:732px" width="30" height="12"><path d="M3,0 H22 L29,12 H3 Z" fill="#8ec0ec"/><path d="M3,0 H22 L29,12 H3 Z" fill="none" stroke="#6aa4dc"/><path d="M12,12 L17,6 V12 Z" fill="#fff"/><path d="M19,7 a4,4 0 0 1 3,5" stroke="#fff" stroke-width="1.5" fill="none"/></svg>
<svg class="a" style="left:297px;top:732px" width="30" height="12"><path d="M1,1 H19 L28,12 H1 Z" fill="#fff" stroke="#d8d8d8"/><path d="M11,12 L13,4 H18 V12" stroke="#e02020" stroke-width="2.2" fill="none"/></svg>
<svg class="a" style="left:359px;top:732px" width="30" height="12"><circle cx="14" cy="14" r="13.5" fill="#f4f4f4"/><path d="M2,6 L10,10 L14,14 L26,3 L28,8 L14,18 L1,11 Z" fill="#ff1a1a"/></svg>
<svg class="a" style="left:420px;top:732px" width="32" height="12"><rect x="0" y="0" width="32" height="12" fill="#fff"/><circle cx="16" cy="12" r="10" fill="#1f6fb5"/><path d="M16,2 a10,10 0 0 0 -10,10 h6 a6,6 0 0 1 8,-6 z" fill="#f39a3a"/><circle cx="18" cy="11" r="3" fill="#fff"/></svg>
<svg class="a" style="left:481px;top:735px" width="32" height="9"><ellipse cx="16" cy="13" rx="13" ry="12" fill="#a8261c"/><path d="M9,6 q6,-5 14,-1" stroke="#c84a3a" stroke-width="2" fill="none"/></svg>
<svg class="a" style="left:545px;top:732px" width="26" height="12"><rect x="0.5" y="0.5" width="18" height="11" fill="#eaf2fb" stroke="#6a9fd8"/><rect x="1" y="1" width="17" height="2" fill="#5a90d0"/><rect x="6.5" y="4.5" width="18" height="8" fill="#f4f8fd" stroke="#2a6cc0"/><rect x="7" y="5" width="17" height="2" fill="#2a6cc0"/><circle cx="8" cy="12" r="3" fill="#e08020"/></svg>
<svg class="a" style="left:606px;top:733px" width="30" height="11"><circle cx="15" cy="13" r="12.5" fill="#00aff0"/><circle cx="6" cy="5" r="5" fill="#00aff0"/><path d="M10,11 a5,4 0 0 1 10,0" stroke="#fff" stroke-width="2.5" fill="none"/></svg>
<svg class="a" style="left:1135px;top:740px" width="100" height="4"><path d="M3,4 L5.5,1.5 L8,4" stroke="#fff" stroke-width="1.3" fill="none"/><rect x="23" y="2" width="16" height="2" fill="#eee"/><rect x="23" y="1.5" width="16" height="1" fill="#555"/><rect x="50" y="1" width="1.5" height="3" fill="#fff"/><rect x="53" y="1" width="1.5" height="3" fill="#fff"/><rect x="56" y="1.5" width="7" height="2.5" fill="#fff"/><rect x="70" y="2" width="13" height="2" fill="#fff"/><rect x="72" y="1" width="5" height="1.5" fill="#fff"/></svg>
<div class="a" style="left:1289px;top:733px;font-size:13px;letter-spacing:-0.6px;line-height:16px;color:#fff;-webkit-text-stroke:0.2px #fff;white-space:nowrap">14:17</div>
</body></html>
